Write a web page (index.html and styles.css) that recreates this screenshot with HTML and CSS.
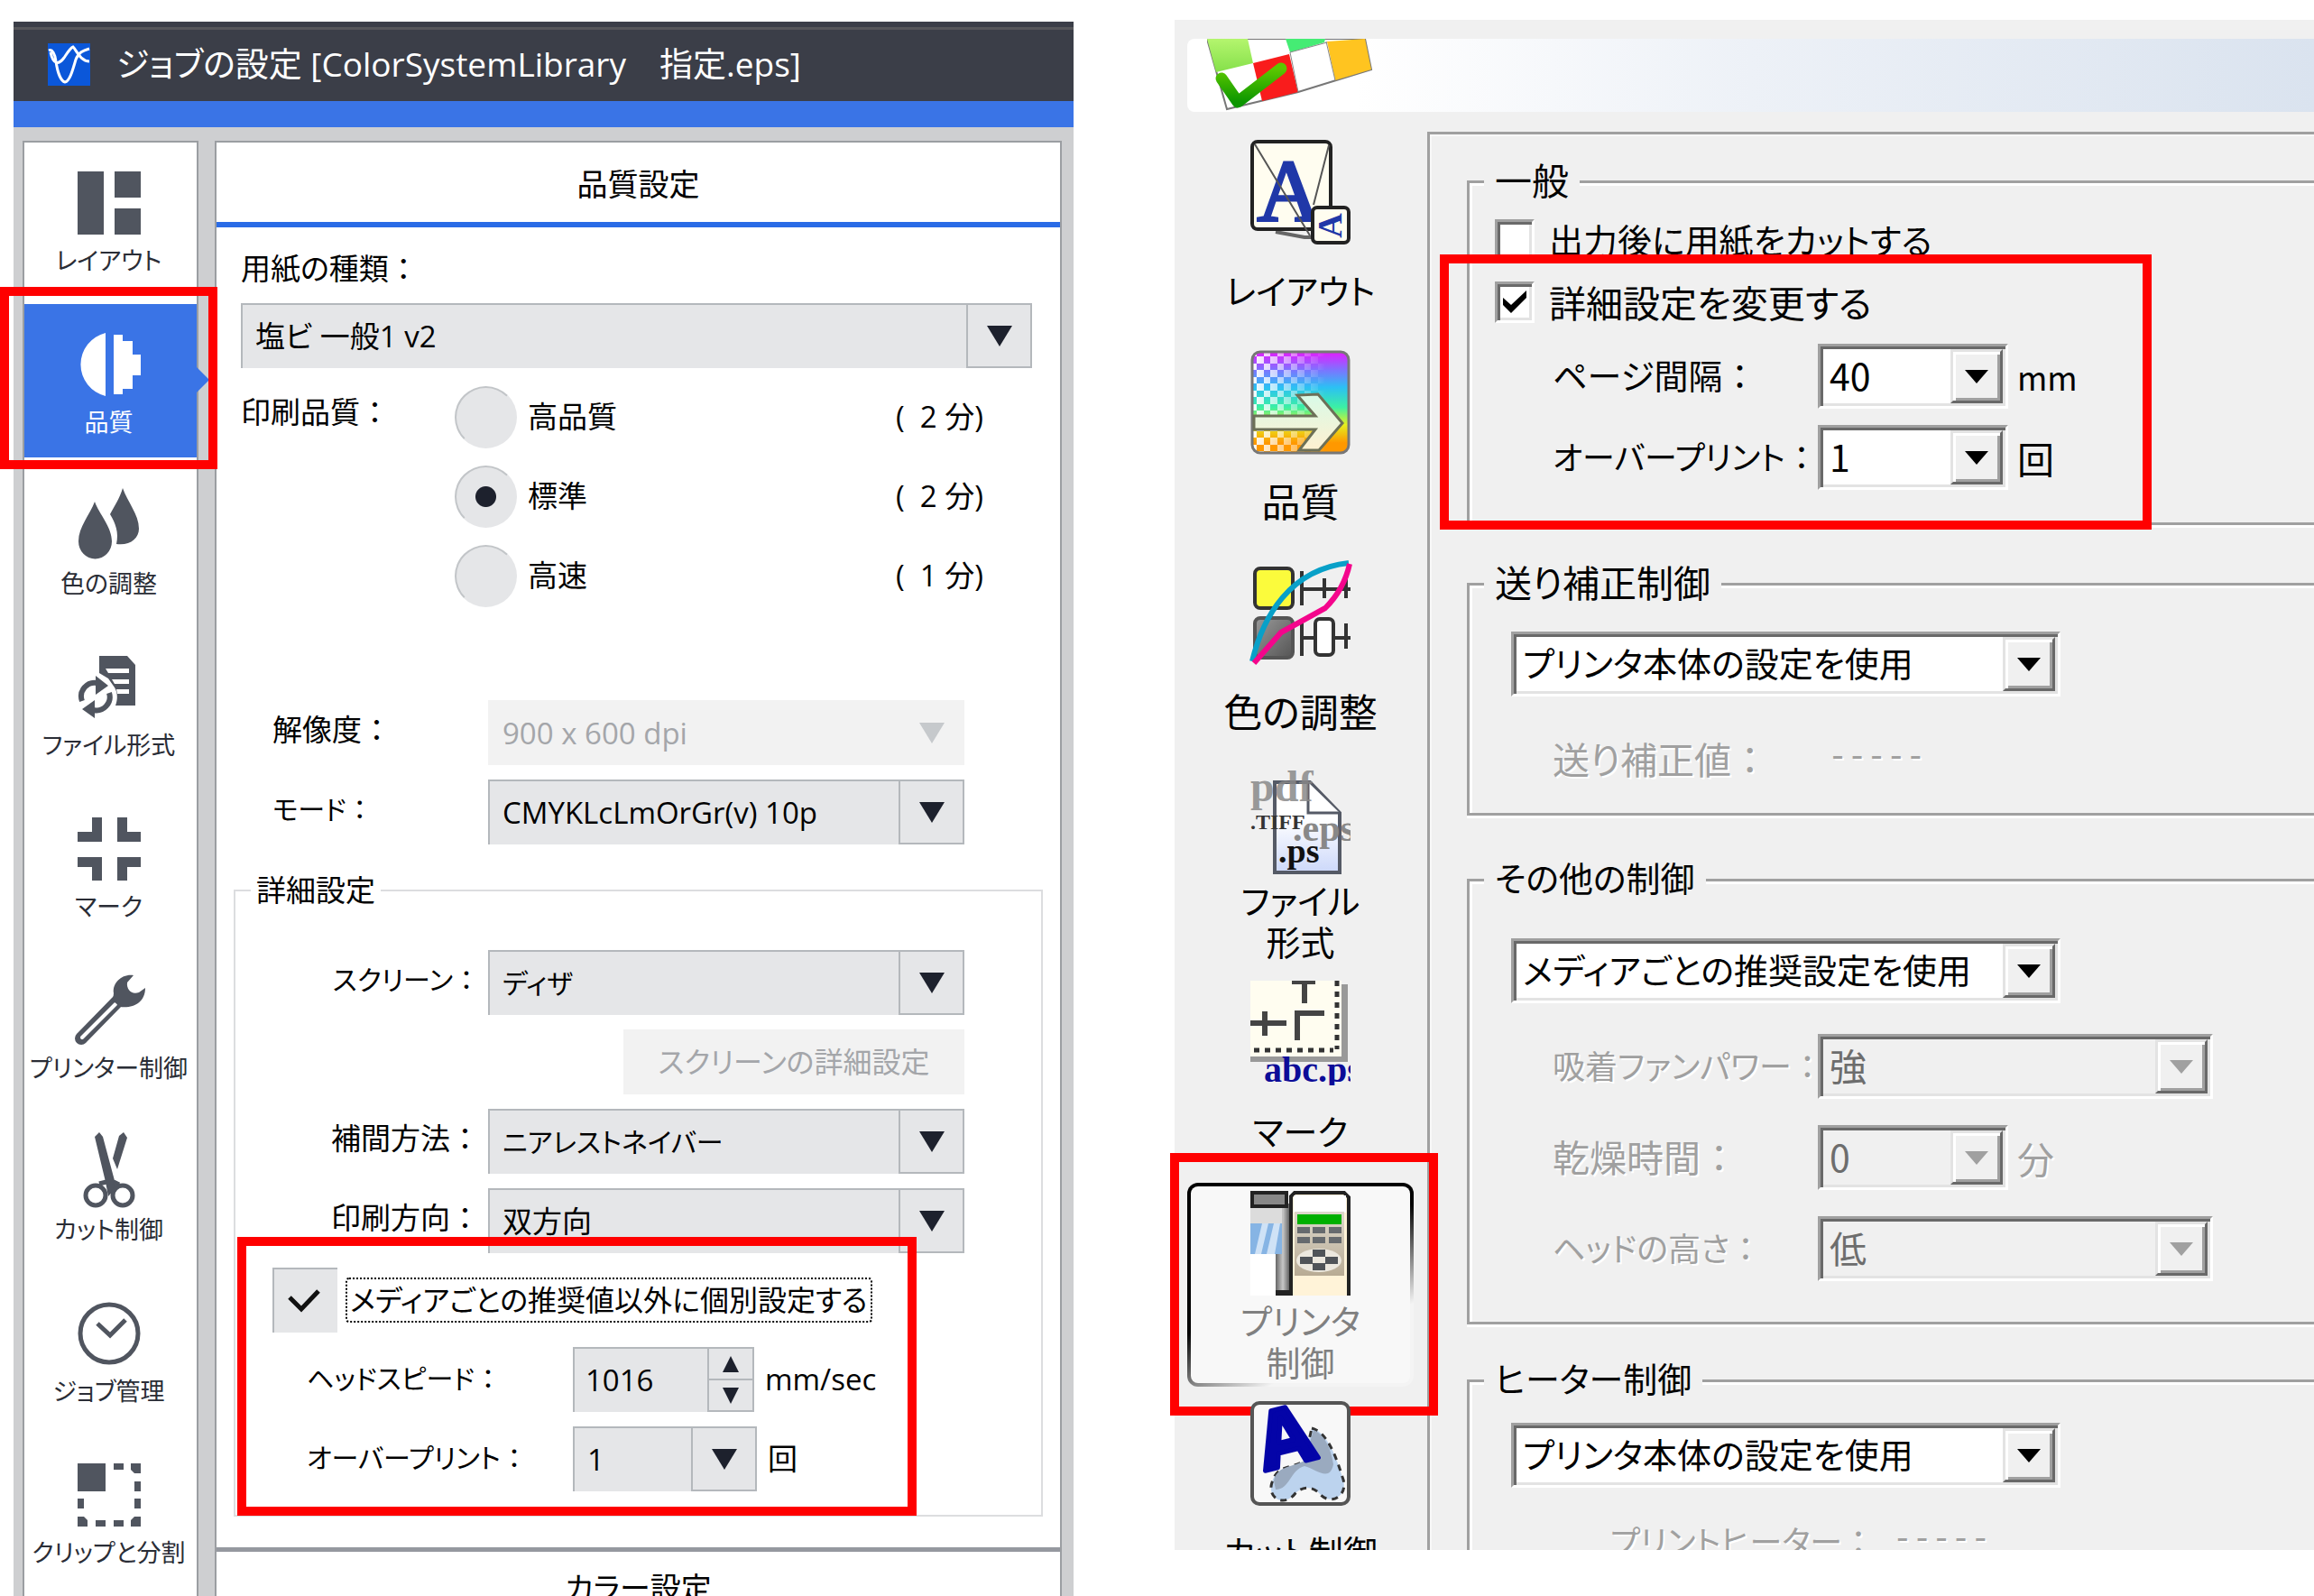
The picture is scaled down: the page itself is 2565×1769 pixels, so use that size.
FILE: index.html
```html
<!DOCTYPE html>
<html lang="ja">

<head>
    <meta charset="UTF-8">
    <meta name="viewport" content="width=device-width, initial-scale=1.0">
    <title>ジョブの設定</title>
    <link rel="stylesheet" href="styles.css">
</head>

<body>
    <div class="page">

        <!-- ジョブの設定 -->
        <section class="job">
            <header class="job-title">
                <svg class="job-logo" viewBox="0 0 47 47">
                    <rect width="47" height="47" fill="#0b57d9" />
                    <path d="M1 8C5 6 8 12 9 20M9 20C11 34 15 42 19 43C24 42 27 32 31 18C34 10 39 8 46 6M3 10C6 24 12 24 18 16C22 10 25 5 28 4C32 8 36 20 46 20" fill="none" stroke="#fff" stroke-width="3" />
                </svg>
                <h1>ジョブの設定 [ColorSystemLibrary　指定.eps]</h1>
            </header>
            <div class="job-main">
                <nav class="job-nav">
                    <button type="button">
                        <svg viewBox="0 0 70 70">
                            <path d="M0 0h29v70H0zM41 0h29v29H41zM41 41h29v29H41z" />
                        </svg>
                        レイアウト
                    </button>
                    <button type="button" class="active">
                        <svg viewBox="0 0 70 70">
                            <path d="M31 0A36 36 0 0 0 31 70zM40 2h10v7h11v15h9v23h-9v15H50v6H40z" />
                        </svg>
                        品質
                        <span class="mark mark-quality"></span>
                    </button>
                    <button type="button">
                        <svg viewBox="0 0 70 70">
                            <path d="M19 8C14 22 1 36 1 52a18 19 0 0 0 37 0C38 36 24 22 19 8z" />
                            <path d="M50 -7C47 4 40 14 36 22C42 32 46 42 43 55C58 57 68 49 68 38C68 22 55 8 50 -7z" />
                        </svg>
                        色の調整
                    </button>
                    <button type="button">
                        <svg viewBox="0 0 70 70">
                            <path d="M24 0H55L64 10V55H42C45 47 44 40 41 35L34 25L24 19z" />
                            <path d="M31 14h26v5H34zM38 26h19v5H41zM43 37h14v5H44z" fill="#fff" />
                            <path d="M5 50A15 15 0 0 1 22 30M35 41A15 15 0 0 1 17 60" fill="none" stroke="#50555f" stroke-width="6" />
                            <path d="M20 22L34 33L20 43zM19 49V69L5 59z" />
                        </svg>
                        ファイル形式
                    </button>
                    <button type="button">
                        <svg viewBox="0 0 70 70">
                            <path d="M16 0h11v27H0V16h16zM44 0h11v16h15v11H44zM0 44h27v26H16V55H0zM44 44h26v11H55v15H44z" />
                        </svg>
                        マーク
                    </button>
                    <button type="button">
                        <svg viewBox="0 0 70 70">
                            <path d="M45 24L4 66" fill="none" stroke="#50555f" stroke-width="14" stroke-linecap="round" />
                            <path d="M42 28L5 65" fill="none" stroke="#fff" stroke-width="4" stroke-linecap="round" />
                            <path d="M62 -4C50 -6 38 4 40 16L39 24L47 31C62 33 75 26 75 10L68 15C60 18 54 12 55 4z" />
                        </svg>
                        プリンター制御
                    </button>
                    <button type="button">
                        <svg viewBox="0 0 70 70">
                            <path d="M19 -4L24 -9L28 -4L43 52L34 62L31 46zM51 -9L55 -3L44 32L39 20L46 -5z" />
                            <path d="M24 48L32 46M46 49L40 46" stroke="#50555f" stroke-width="5" />
                            <circle cx="20" cy="61" r="11" fill="none" stroke="#50555f" stroke-width="5" />
                            <circle cx="50" cy="61" r="11" fill="none" stroke="#50555f" stroke-width="5" />
                        </svg>
                        カット制御
                    </button>
                    <button type="button">
                        <svg viewBox="0 0 70 70">
                            <circle cx="35" cy="35" r="32" fill="none" stroke="#50555f" stroke-width="5" />
                            <path d="M22 24L36 37L53 20" fill="none" stroke="#50555f" stroke-width="5" />
                        </svg>
                        ジョブ管理
                    </button>
                    <button type="button">
                        <svg viewBox="0 0 70 70">
                            <path d="M0 0h31v31H0zM40 0h11v7H40zM59 0h11v11h-7L59 7zM63 20h7v11h-7zM63 39h7v11h-7zM70 59v11H59v-7l4-4zM40 63h11v7H40zM20 63h11v7H20zM0 59h7l4 4v7H0zM0 39h7v11H0z" />
                        </svg>
                        クリップと分割
                    </button>
                </nav>

                <form class="job-panel">
                    <h2 class="panel-head">品質設定</h2>
                    <div class="panel-body">
                        <div class="paper">
                            <label for="paper">用紙の種類<span class="colon">：</span></label>
                            <div class="combo">
                                <select id="paper"><option>塩ビ 一般1 v2</option></select>
                                <span class="drop"></span>
                            </div>
                        </div>

                        <div class="quality" role="radiogroup" aria-label="印刷品質">
                            <span class="quality-title">印刷品質<span class="colon">：</span></span>
                            <div class="quality-list">
                                <label><input type="radio" name="quality"><span>高品質</span><span class="time">( &nbsp;2 分)</span></label>
                                <label><input type="radio" name="quality" checked><span>標準</span><span class="time">( &nbsp;2 分)</span></label>
                                <label><input type="radio" name="quality"><span>高速</span><span class="time">( &nbsp;1 分)</span></label>
                            </div>
                        </div>

                        <div class="rows rows-base">
                            <label for="dpi">解像度<span class="colon">：</span></label>
                            <div class="combo">
                                <select id="dpi" disabled><option>900 x 600 dpi</option></select>
                                <span class="drop"></span>
                            </div>
                            <label for="mode" class="kana">モード<span class="colon">：</span></label>
                            <div class="combo">
                                <select id="mode"><option>CMYKLcLmOrGr(v) 10p</option></select>
                                <span class="drop"></span>
                            </div>
                        </div>

                        <fieldset class="detail">
                            <legend>詳細設定</legend>
                            <div class="rows rows-detail">
                                <label for="screen" class="kana">スクリーン<span class="colon">：</span></label>
                                <div class="combo kana">
                                    <select id="screen"><option>ディザ</option></select>
                                    <span class="drop"></span>
                                </div>
                                <button type="button" class="screen-more" disabled>スクリーンの詳細設定</button>
                                <label for="interp">補間方法<span class="colon">：</span></label>
                                <div class="combo kana">
                                    <select id="interp"><option>ニアレストネイバー</option></select>
                                    <span class="drop"></span>
                                </div>
                                <label for="direction">印刷方向<span class="colon">：</span></label>
                                <div class="combo">
                                    <select id="direction"><option>双方向</option></select>
                                    <span class="drop"></span>
                                </div>
                            </div>
                            <div class="custom">
                                <div class="custom-check">
                                    <span class="tick">
                                        <input type="checkbox" id="custom" checked>
                                        <svg viewBox="0 0 36 26"><path d="M2 9L15 22L34 2" /></svg>
                                    </span>
                                    <label for="custom">メディアごとの推奨値以外に個別設定する</label>
                                </div>
                                <div class="custom-row">
                                    <label for="speed" class="kana">ヘッドスピード<span class="colon">：</span></label>
                                    <div class="spin">
                                        <input type="text" id="speed" value="1016">
                                        <div class="spin-buttons">
                                            <button type="button" class="up" aria-label="増やす"></button>
                                            <button type="button" class="down" aria-label="減らす"></button>
                                        </div>
                                    </div>
                                    <span>mm/sec</span>
                                </div>
                                <div class="custom-row">
                                    <label for="overprint" class="kana">オーバープリント<span class="colon">：</span></label>
                                    <div class="combo">
                                        <select id="overprint"><option>1</option></select>
                                        <span class="drop"></span>
                                    </div>
                                    <span>回</span>
                                </div>
                                <span class="mark mark-custom"></span>
                            </div>
                        </fieldset>
                    </div>
                    <h2 class="panel-next">カラー設定</h2>
                </form>
            </div>
        </section>

        <!-- 旧バージョンの設定画面 -->
        <section class="classic">
            <div class="banner">
                <svg viewBox="0 0 190 81">
                    <defs>
                        <linearGradient id="lime" x1="0" y1="0" x2="0" y2="1"><stop offset="0" stop-color="#b4f56e" /><stop offset="1" stop-color="#85e04a" /></linearGradient>
                        <linearGradient id="tick" x1="0" y1="0" x2="0" y2="1"><stop offset="0" stop-color="#5cc800" /><stop offset="1" stop-color="#0c9600" /></linearGradient>
                    </defs>
                    <path d="M0 0L22 78L101 59L182 34L175 0z" fill="#fff" stroke="#777" stroke-width="2" />
                    <path d="M0 0H45L51 27L10 37z" fill="url(#lime)" />
                    <path d="M87 0H131L130 4L92 15z" fill="#45ec74" />
                    <path d="M51 27L91 17L101 59L61 69z" fill="#f91c1c" />
                    <path d="M133 3L175 0L182 34L142 46z" fill="#ffc420" />
                    <path d="M92 15L101 59M132 3L142 46M92 15L133 4" fill="none" stroke="#888" stroke-width="1" />
                    <path d="M16 44L34 70L82 33" fill="none" stroke="url(#tick)" stroke-width="13" stroke-linecap="round" stroke-linejoin="round" />
                </svg>
            </div>

            <div class="classic-main">
                <nav class="classic-nav">
                    <button type="button">
                        <svg viewBox="0 0 111 116">
                            <path d="M28 102L60 108H75" fill="none" stroke="#666" stroke-width="4" />
                            <rect x="2" y="2" width="87" height="97" rx="6" fill="#fffdf0" stroke="#222" stroke-width="4" />
                            <text x="43" y="89" class="serif" font-size="98" text-anchor="middle" fill="#2038a8" stroke="#2038a8" stroke-width="3">A</text>
                            <path d="M5 5L66 106M87 6L70 72" fill="none" stroke="#555" stroke-width="2" />
                            <rect x="69" y="75" width="40" height="39" rx="5" fill="#fffdf0" stroke="#222" stroke-width="4" />
                            <text x="0" y="0" class="serif" font-size="38" font-weight="700" text-anchor="middle" fill="#2038a8" transform="translate(101 95) rotate(-90)">A</text>
                        </svg>
                        <span class="kana">レイアウト</span>
                    </button>
                    <button type="button">
                        <svg viewBox="0 0 111 116">
                            <defs>
                                <linearGradient id="rainbow" x1="0" y1="0" x2="0" y2="1">
                                    <stop offset="0" stop-color="#e41cff" />
                                    <stop offset=".18" stop-color="#7c74ff" />
                                    <stop offset=".35" stop-color="#2cc0f4" />
                                    <stop offset=".55" stop-color="#3cf0a4" />
                                    <stop offset=".72" stop-color="#e4f020" />
                                    <stop offset=".9" stop-color="#ff9800" />
                                </linearGradient>
                                <pattern id="dots" width="15" height="15" patternUnits="userSpaceOnUse">
                                    <path d="M0 0h7v7H0zM7 7h8v8H7z" fill="#fff" />
                                </pattern>
                                <linearGradient id="fade"><stop offset="0" stop-color="#fff" /><stop offset=".75" stop-color="#000" /></linearGradient>
                                <mask id="fadeMask"><rect width="111" height="116" fill="url(#fade)" /></mask>
                                <linearGradient id="arrowFill" x1="0" y1="0" x2="0" y2="1"><stop offset="0" stop-color="#d8fbe8" /><stop offset="1" stop-color="#fff0d0" /></linearGradient>
                            </defs>
                            <rect x="2" y="2" width="107" height="112" rx="9" fill="url(#rainbow)" />
                            <rect x="2" y="2" width="107" height="112" rx="9" fill="url(#dots)" mask="url(#fadeMask)" />
                            <rect x="2" y="2" width="107" height="112" rx="9" fill="none" stroke="#777" stroke-width="3" />
                            <path d="M4 73H72L52 50L75 49L102 81L76 111H54L72 88H4z" fill="url(#arrowFill)" stroke="#6c7058" stroke-width="3" />
                        </svg>
                        <span>品質</span>
                    </button>
                    <button type="button">
                        <svg viewBox="0 0 111 116">
                            <defs>
                                <linearGradient id="grey" x1="0" y1="0" x2="1" y2="1"><stop offset="0" stop-color="#999" /><stop offset="1" stop-color="#555" /></linearGradient>
                            </defs>
                            <rect x="5" y="9" width="42" height="44" rx="6" fill="#fbfb3c" stroke="#333" stroke-width="4" />
                            <rect x="5" y="64" width="42" height="44" rx="6" fill="url(#grey)" stroke="#555" stroke-width="4" />
                            <path d="M57 12V50M57 32H111M82 20V42M106 20V42M57 65V106M57 86H111M106 70V98" fill="none" stroke="#333" stroke-width="4" />
                            <rect x="72" y="65" width="20" height="40" rx="5" fill="#fff" stroke="#333" stroke-width="4" />
                            <path d="M2 112C14 62 44 10 109 3" fill="none" stroke="#08a0c8" stroke-width="6" />
                            <path d="M4 114L34 80L83 53Q104 32 110 4" fill="none" stroke="#f4058c" stroke-width="6" />
                        </svg>
                        <span>色の調整</span>
                    </button>
                    <button type="button">
                        <svg viewBox="0 0 111 116" class="clip">
                            <defs>
                                <linearGradient id="paperFill" x1="0" y1="0" x2="0" y2="1"><stop offset=".4" stop-color="#fff" /><stop offset="1" stop-color="#ccd8fa" /></linearGradient>
                            </defs>
                            <path d="M27 13H66L99 47V113H27z" fill="url(#paperFill)" stroke="#555a66" stroke-width="4" />
                            <path d="M64 13V47H99" fill="#fff" stroke="#555a66" stroke-width="3" />
                            <text x="0" y="34" class="serif" font-size="48" font-weight="700" fill="#888" fill-opacity=".85">pdf</text>
                            <text x="0" y="65" class="serif" font-size="24" font-weight="700" fill="#333">.TIFF</text>
                            <text x="47" y="78" class="serif" font-size="42" font-weight="700" fill="#888">.eps</text>
                            <text x="31" y="102" class="serif" font-size="38" font-weight="700" fill="#111">.ps</text>
                        </svg>
                        <span class="kana">ファイル<br>形式</span>
                    </button>
                    <button type="button">
                        <svg viewBox="0 0 111 116" class="clip">
                            <path d="M4 4H108V90H0V84z" fill="#999" />
                            <rect width="101" height="84" fill="#fffdf0" />
                            <path d="M46 1H72M60 0V25M0 47H40M16 34V61M52 66V36H82" fill="none" stroke="#444" stroke-width="6" />
                            <path d="M96 0V76M4 77H92" fill="none" stroke="#333" stroke-width="5" stroke-dasharray="6 6" />
                            <text x="15" y="112" class="serif" font-size="40" font-weight="700" fill="#0c0c98">abc.ps</text>
                        </svg>
                        <span class="kana">マーク</span>
                    </button>
                    <button type="button" class="active">
                        <svg viewBox="0 0 111 116">
                            <defs>
                                <linearGradient id="post"><stop offset="0" stop-color="#666" /><stop offset=".5" stop-color="#c8c8c8" /><stop offset="1" stop-color="#555" /></linearGradient>
                                <linearGradient id="panel" x1="0" y1="0" x2="0" y2="1"><stop offset="0" stop-color="#ddd8cc" /><stop offset="1" stop-color="#b8ab94" /></linearGradient>
                            </defs>
                            <rect y="70" width="30" height="46" fill="#fff" />
                            <rect x="28" y="14" width="16" height="102" fill="url(#post)" />
                            <rect y="16" width="35" height="20" fill="#dcdcdc" />
                            <rect y="36" width="35" height="34" fill="#86b4e4" />
                            <path d="M5 70L13 36H20L12 70zM18 70L26 36H33L27 70z" fill="#cfe2f6" />
                            <rect x="2" y="2" width="38" height="15" fill="#888" stroke="#222" stroke-width="4" />
                            <rect x="28" y="110" width="16" height="6" fill="#222" />
                            <path d="M45 116V6L49 2H104L109 7V116" fill="#fff3d8" stroke="#222" stroke-width="4" />
                            <rect x="48" y="5" width="58" height="19" fill="#fff" />
                            <rect x="49" y="23" width="55" height="71" fill="url(#panel)" />
                            <rect x="52" y="26" width="49" height="11" fill="#00b000" />
                            <path d="M52 40h14v7H52zM69 40h14v7H69zM87 40h14v7H87zM52 51h14v7H52zM69 51h14v7H69zM87 51h14v7H87z" fill="#666a6e" />
                            <ellipse cx="76" cy="77" rx="25" ry="13" fill="#ece8de" />
                            <path d="M69 65h14v8H69zM69 80h14v8H69zM55 73h14v8H55zM83 73h14v8H83z" fill="#505458" />
                        </svg>
                        <span class="kana">プリンタ<br>制御</span>
                        <i class="mark mark-printer"></i>
                    </button>
                    <button type="button">
                        <svg viewBox="0 0 111 116">
                            <rect x="2" y="2" width="107" height="112" rx="8" fill="#f8f8f8" stroke="#555" stroke-width="4" />
                            <path d="M68 30C84 34 94 58 102 84C110 104 90 116 78 104C70 94 58 94 50 102C38 118 18 108 24 90C30 70 44 76 60 66z" fill="#bcd3ee" stroke="#333" stroke-width="3" stroke-dasharray="7 6" />
                            <path d="M26 88C30 72 44 74 60 66L70 32C84 38 90 56 92 70C88 90 74 76 60 72C44 76 44 98 28 98z" fill="#9aaabf" />
                            <text x="0" y="0" class="cut-letter" font-size="88" text-anchor="middle" transform="translate(46 70) rotate(-14)">A</text>
                        </svg>
                        <span class="kana">カット制御</span>
                    </button>
                </nav>

                <form class="classic-panel">
                    <fieldset class="group group-general">
                        <legend>一般</legend>
                        <div class="check">
                            <input type="checkbox" id="cut-after">
                            <label for="cut-after" class="mixed">出力後に用紙をカットする</label>
                        </div>
                        <div class="check">
                            <input type="checkbox" id="change-detail" checked>
                            <svg viewBox="0 0 26 26"><path d="M0 8V16L9 25L26 8V0L9 16z" /></svg>
                            <label for="change-detail">詳細設定を変更する</label>
                        </div>
                        <div class="field">
                            <label for="page-gap" class="mixed">ページ間隔<span class="colon">：</span></label>
                            <div class="box box-small">
                                <select id="page-gap"><option>40</option></select>
                                <span class="box-drop"></span>
                            </div>
                            <span class="kana">mm</span>
                        </div>
                        <div class="field">
                            <label for="classic-over" class="kana">オーバープリント<span class="colon">：</span></label>
                            <div class="box box-small">
                                <select id="classic-over"><option>1</option></select>
                                <span class="box-drop"></span>
                            </div>
                            <span>回</span>
                        </div>
                        <span class="mark mark-general"></span>
                    </fieldset>

                    <fieldset class="group group-feed">
                        <legend>送り補正制御</legend>
                        <div class="box box-wide">
                            <select aria-label="送り補正制御"><option>プリンタ本体の設定を使用</option></select>
                            <span class="box-drop"></span>
                        </div>
                        <div class="value">
                            <span>送り補正値<span class="colon">：</span></span>
                            <span class="dashes">-----</span>
                        </div>
                    </fieldset>

                    <fieldset class="group group-other">
                        <legend class="mixed">その他の制御</legend>
                        <div class="box box-wide">
                            <select aria-label="その他の制御"><option>メディアごとの推奨設定を使用</option></select>
                            <span class="box-drop"></span>
                        </div>
                        <div class="field off">
                            <label for="fan" class="kana">吸着ファンパワー<span class="colon">：</span></label>
                            <div class="box box-mid">
                                <select id="fan" disabled><option>強</option></select>
                                <span class="box-drop"></span>
                            </div>
                        </div>
                        <div class="field off">
                            <label for="dry">乾燥時間<span class="colon">：</span></label>
                            <div class="box box-small">
                                <select id="dry" disabled><option>0</option></select>
                                <span class="box-drop"></span>
                            </div>
                            <span>分</span>
                        </div>
                        <div class="field off">
                            <label for="head" class="kana">ヘッドの高さ<span class="colon">：</span></label>
                            <div class="box box-mid">
                                <select id="head" disabled><option>低</option></select>
                                <span class="box-drop"></span>
                            </div>
                        </div>
                    </fieldset>

                    <fieldset class="group group-heater">
                        <legend class="mixed">ヒーター制御</legend>
                        <div class="box box-wide">
                            <select aria-label="ヒーター制御"><option>プリンタ本体の設定を使用</option></select>
                            <span class="box-drop"></span>
                        </div>
                        <div class="value value-deep">
                            <span class="kana">プリントヒーター<span class="colon">：</span></span>
                            <span class="dashes">-----</span>
                        </div>
                    </fieldset>
                </form>
            </div>
        </section>
    </div>
</body>

</html>
```
FILE: styles.css
```css
* {
    margin: 0;
    padding: 0;
    box-sizing: border-box;
}

body {
    background: #fff;
    color: #000;
    font-family: "Open Sans", "Noto Sans CJK JP", sans-serif;
    font-size: 33px;
    line-height: 46px;
    font-feature-settings: "palt";
}

button,
input,
select {
    font: inherit;
    font-feature-settings: inherit;
    color: inherit;
    border: 0;
    border-radius: 0;
    background: none;
    appearance: none;
}

fieldset {
    border: 0;
    min-width: 0;
}

h1,
h2 {
    font-size: 34px;
    font-weight: 400;
}

label,
legend,
span {
    white-space: nowrap;
}

/* full-width colon after a label */
.colon {
    font-family: "Noto Sans CJK JP", sans-serif;
    font-feature-settings: normal;
}

.page {
    display: grid;
    grid-template-columns: 1175fr 1263fr;
    grid-template-rows: minmax(0, 1fr);
    gap: 112px;
    height: 100vh;
    padding-left: 15px;
    overflow: hidden;
}

/* red frames */
.mark {
    position: absolute;
    z-index: 5;
    border: 10px solid #f00;
    pointer-events: none;
}

/* ---------- job settings ---------- */
.job {
    display: flex;
    flex-direction: column;
    min-width: 0;
    margin-top: 24px;
    background: #cecfd1;
}

.job .kana {
    font-size: 30px;
}

.job-title {
    display: flex;
    flex-shrink: 0;
    align-items: center;
    gap: 29px;
    height: 117px;
    padding: 6px 38px 0;
    border-bottom: 29px solid #3a74e6;
    background: linear-gradient(#3b3e48 6px, #56565a 6px, #56565a 9px, #3b3e48 9px);
    color: #fff;
}

.job-title h1 {
    font-size: 37px;
}

.job-logo {
    width: 47px;
    height: 47px;
}

.job-main {
    display: grid;
    grid-template-columns: 195px 1fr;
    gap: 18px;
    padding: 15px 13px 0 10px;
    flex: 1;
    min-height: 0;
}

.job-nav,
.job-panel {
    border: 2px solid #9b9ea2;
    border-bottom: 0;
    background: #fff;
}

.job-nav {
    display: flex;
    flex-direction: column;
    gap: 9px;
}

.job-nav button {
    position: relative;
    display: flex;
    flex-direction: column;
    align-items: center;
    flex-shrink: 0;
    gap: 11px;
    height: 170px;
    padding: 32px 4px 0 0;
    font-size: 27px;
    line-height: 36px;
    white-space: nowrap;
    color: #2a2d36;
}

.job-nav svg {
    width: 70px;
    height: 70px;
    overflow: visible;
    fill: #50555f;
}

.job-nav .active {
    background: #3a74e6;
    color: #fff;
}

.job-nav .active svg {
    fill: #fff;
}

.job-nav .active::after {
    content: "";
    position: absolute;
    left: 100%;
    top: 70px;
    border: 14px solid transparent;
    border-left-color: #3a74e6;
    border-right: 0;
}

.mark-quality {
    left: -27px;
    right: -23px;
    top: -19px;
    bottom: -13px;
}

.panel-head {
    height: 94px;
    border-bottom: 6px solid #2a6be6;
    text-align: center;
    line-height: 92px;
}

.panel-body {
    padding: 21px 19px 34px;
}

.paper {
    display: flex;
    flex-direction: column;
    gap: 15px;
    padding: 0 12px 0 8px;
}

.combo {
    position: relative;
    height: 72px;
}

.combo select {
    width: 100%;
    height: 100%;
    padding: 0 80px 0 14px;
    border: 2px solid #b4b8bc;
    border-right: 0;
    border-bottom: 0;
    background: #e5e6e8;
}

.drop {
    position: absolute;
    right: 0;
    top: 0;
    bottom: 0;
    display: flex;
    align-items: center;
    justify-content: center;
    width: 73px;
    border: 2px solid #b4b8bc;
    pointer-events: none;
}

.drop::after {
    content: "";
    border: 14px solid transparent;
    border-top: 23px solid #1d212d;
    border-bottom: 0;
}

.combo select:disabled {
    border-color: #f2f2f2;
    background: #f2f2f2;
    color: #a4a6aa;
    opacity: 1;
}

.combo select:disabled + .drop {
    border-color: transparent;
}

.combo select:disabled + .drop::after {
    border-top-color: #c6c9cc;
}

.quality {
    display: grid;
    grid-template-columns: 237px 1fr;
    padding: 10px 66px 0 8px;
}

.quality-title {
    line-height: 74px;
}

.quality-list label {
    display: flex;
    align-items: center;
    gap: 12px;
    height: 88px;
}

.quality-list input {
    width: 69px;
    height: 69px;
    border: 2px solid #e5e6e8;
    border-top-color: #c2c5c8;
    border-left-color: #c2c5c8;
    border-radius: 50%;
    background: #e5e6e8;
}

.quality-list input:checked {
    background: radial-gradient(circle, #1d212d 11px, #e5e6e8 12px);
}

.time {
    margin-left: auto;
}

.rows {
    display: grid;
    grid-auto-rows: 72px;
    row-gap: 16px;
}

.rows label {
    align-self: center;
    padding-bottom: 8px;
}

.rows-base {
    grid-template-columns: 239px 1fr;
    padding: 94px 87px 0 43px;
}

.detail {
    margin-top: 28px;
    padding-bottom: 26px;
    border: 2px solid #dcdddf;
}

.detail legend {
    margin-left: 17px;
    padding: 0 6px;
}

.rows-detail {
    grid-template-columns: 271px 1fr;
    column-gap: 9px;
    padding: 43px 85px 0 0;
}

.rows-detail label {
    justify-self: end;
}

.screen-more {
    grid-column: 2;
    justify-self: end;
    width: 378px;
    background: #f2f2f2;
    font-size: 32px;
    color: #a4a6aa;
}

.custom {
    position: relative;
    display: flex;
    flex-direction: column;
    gap: 16px;
    padding-top: 16px;
}

.custom-check,
.custom-row {
    display: flex;
    align-items: center;
    height: 72px;
}

.custom-check {
    gap: 9px;
    padding-left: 41px;
    font-size: 32px;
}

.custom-check label {
    padding: 0 3px;
    border: 2px dotted #000;
    border-radius: 4px;
}

.tick {
    position: relative;
    width: 72px;
    height: 72px;
}

.tick input {
    display: block;
    width: 100%;
    height: 100%;
    border: 2px solid #b4b8bc;
    border-right: 0;
    border-bottom: 0;
    background: #e5e6e8;
}

.tick svg {
    position: absolute;
    left: 17px;
    top: 24px;
    width: 36px;
    height: 26px;
    fill: none;
    stroke: #111;
    stroke-width: 5;
}

.custom-row {
    gap: 12px;
    padding-left: 79px;
}

.custom-row label {
    width: 283px;
    padding-bottom: 4px;
}

.custom-row .combo {
    width: 204px;
}

.spin {
    display: flex;
    width: 201px;
    height: 72px;
    border: 2px solid #b4b8bc;
    border-right: 0;
    border-bottom: 0;
    background: #e5e6e8;
}

.spin input {
    flex: 1;
    min-width: 0;
    padding-left: 12px;
}

.spin-buttons {
    display: grid;
    width: 52px;
    border: 2px solid #b4b8bc;
    border-top: 0;
}

.spin-buttons button {
    display: flex;
    align-items: center;
    justify-content: center;
}

.spin-buttons .down {
    border-top: 2px solid #b4b8bc;
}

.up::after,
.down::after {
    content: "";
    border: 9px solid transparent;
}

.up::after {
    border-top: 0;
    border-bottom: 18px solid #1d212d;
}

.down::after {
    border-bottom: 0;
    border-top: 18px solid #1d212d;
}

.mark-custom {
    left: 2px;
    right: 138px;
    top: -18px;
    bottom: -27px;
}

.panel-next {
    border-top: 5px solid #95989f;
    padding-top: 17px;
    text-align: center;
}

/* ---------- classic settings ---------- */
.classic {
    display: flex;
    flex-direction: column;
    min-width: 0;
    margin: 22px 0 51px;
    padding-top: 21px;
    overflow-y: clip;
    background: #f0f0f0;
    font-family: "Noto Sans CJK JP", sans-serif;
    font-size: 41px;
}

.classic .mixed {
    font-size: 38px;
}

.classic .kana {
    font-size: 36px;
}

.banner {
    flex-shrink: 0;
    height: 81px;
    margin: 0 0 22px 14px;
    padding-left: 22px;
    border-radius: 8px 0 0 8px;
    background: linear-gradient(90deg, #fff 15%, #edf1f7 50%, #dae3ef);
}

.banner svg {
    display: block;
    height: 81px;
}

.classic-main {
    display: grid;
    grid-template-columns: 280px 1fr;
    flex: 1;
    min-height: 0;
}

.classic-nav {
    display: flex;
    flex-direction: column;
    gap: 7px;
    padding: 0 15px 0 14px;
}

.classic-nav button {
    position: relative;
    display: flex;
    flex-direction: column;
    align-items: center;
    flex-shrink: 0;
    gap: 6px;
    height: 226px;
    padding-top: 9px;
    font-size: 43px;
}

.classic-nav svg {
    flex-shrink: 0;
    width: 111px;
    height: 116px;
    overflow: visible;
}

.classic-nav .clip {
    overflow: hidden;
}

.classic-nav span {
    display: flex;
    flex-direction: column;
    align-items: center;
    justify-content: center;
    height: 88px;
}

.classic-nav .kana {
    font-size: 38px;
}

.classic-nav .active {
    isolation: isolate;
    color: #808080;
}

.classic-nav .active::before {
    content: "";
    position: absolute;
    inset: 0;
    z-index: -1;
    border-radius: 12px;
    background: linear-gradient(#f8f8f8, #f8f8f8) padding-box, linear-gradient(150deg, #000 45%, #f4f4f4 75%) border-box;
    border: 4px solid transparent;
}

.mark-printer {
    left: -19px;
    right: -27px;
    top: -33px;
    bottom: -32px;
}

.serif {
    font-family: "Liberation Serif", serif;
}

.cut-letter {
    font-family: "Open Sans", sans-serif;
    font-weight: 700;
    fill: #0404a8;
    stroke: #0404a8;
    stroke-width: 5;
    stroke-linejoin: round;
}

.classic-panel {
    min-width: 0;
    padding: 28px 0 0 41px;
    border-left: 3px solid #a0a0a0;
    border-top: 3px solid #a0a0a0;
    box-shadow: inset 2px 2px #f8f8f8;
}

.group {
    position: relative;
    border: 3px solid #a0a0a0;
    border-right: 0;
    box-shadow: inset 3px 3px #fff, 0 3px #fff;
}

.group legend {
    margin-left: 16px;
    padding: 0 12px 6px;
    line-height: 42px;
    background: #f0f0f0;
}

.group-general {
    padding: 6px 0 36px;
}

.group-feed {
    margin-top: 41px;
    padding: 29px 0 38px;
}

.group-other {
    margin-top: 47px;
    padding: 41px 0 45px;
}

.group-heater {
    margin-top: 38px;
    padding: 23px 0 46px;
}

.check {
    position: relative;
    display: flex;
    align-items: center;
    gap: 16px;
    height: 69px;
    padding-left: 28px;
}

.check label {
    padding-bottom: 2px;
}

.check input {
    width: 44px;
    height: 46px;
    border: 3px solid;
    border-color: #a0a0a0 #fff #fff #a0a0a0;
    background: #fff;
    box-shadow: inset 3px 3px #696969, inset -3px -3px #e3e3e3;
}

.check svg {
    position: absolute;
    left: 37px;
    top: 22px;
    width: 26px;
    height: 26px;
    pointer-events: none;
}

.field {
    display: flex;
    align-items: center;
    gap: 10px;
    margin-top: 18px;
    padding-left: 92px;
}

.check + .field {
    margin-top: 12px;
}

.field label {
    width: 284px;
    padding-bottom: 4px;
}

.off,
.value {
    color: #a0a0a0;
    text-shadow: 2px 2px #fff;
}

.group-other .field {
    margin-top: 29px;
}

.group-other .box-wide + .field {
    margin-top: 34px;
}

.box {
    position: relative;
    height: 72px;
    border: 3px solid;
    border-color: #a0a0a0 #fff #fff #a0a0a0;
    background: #fff;
    box-shadow: inset 3px 3px #696969, inset -3px -3px #e3e3e3;
}

.box-small {
    width: 211px;
}

.box-mid {
    width: 438px;
}

.box-wide {
    width: 609px;
    margin-left: 46px;
    font-size: 38px;
}

.box select {
    width: 100%;
    height: 100%;
    padding: 0 62px 4px 10px;
}

.box select:disabled {
    color: #6d6d6d;
    opacity: 1;
}

.off .box {
    background: #f0f0f0;
}

.box-drop {
    position: absolute;
    right: 3px;
    top: 3px;
    bottom: 3px;
    display: flex;
    align-items: center;
    justify-content: center;
    width: 58px;
    border: 3px solid;
    border-color: #e3e3e3 #696969 #696969 #e3e3e3;
    background: #f0f0f0;
    box-shadow: inset 3px 3px #fff, inset -3px -3px #a0a0a0;
    pointer-events: none;
}

.box-drop::after {
    content: "";
    border: 13px solid transparent;
    border-top: 15px solid #000;
    border-bottom: 0;
}

.off .box-drop::after {
    border-top-color: #a0a0a0;
}

.value {
    display: flex;
    gap: 66px;
    margin-top: 45px;
    padding-left: 92px;
}

.value-deep {
    gap: 20px;
    margin-top: 35px;
    padding-left: 156px;
}

.dashes {
    font-family: "Liberation Mono", monospace;
    font-size: 36px;
}

.mark-general {
    left: -33px;
    top: 57px;
    width: 789px;
    height: 305px;
}
```
